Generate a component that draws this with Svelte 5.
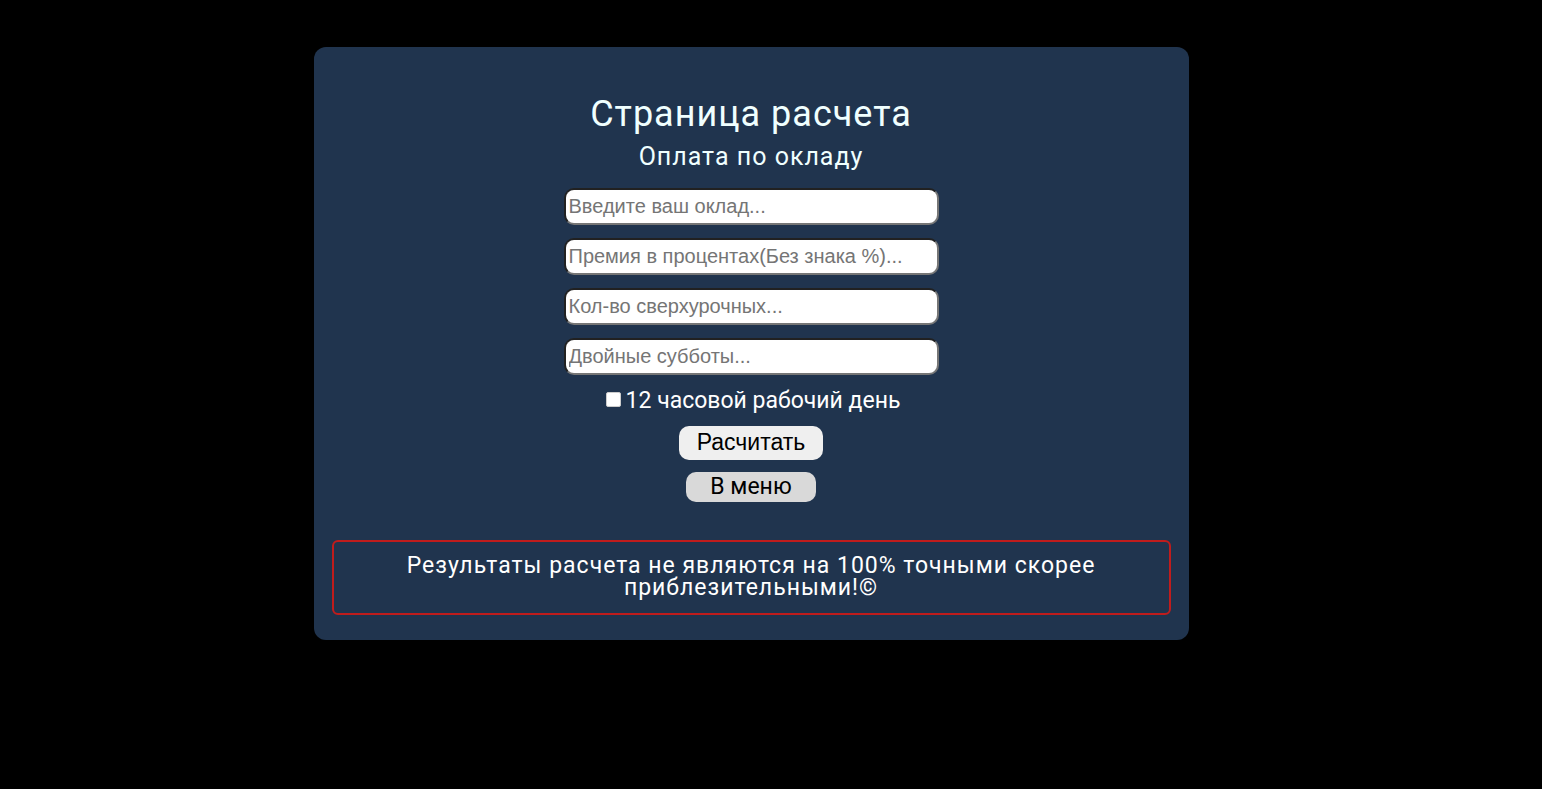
<script>
  const fields = [
    { id: 'salary', hint: 'Введите ваш оклад...' },
    { id: 'bonus', hint: 'Премия в процентах(Без знака %)...' },
    { id: 'overtime', hint: 'Кол-во сверхурочных...' },
    { id: 'saturdays', hint: 'Двойные субботы...' }
  ];
</script>

<main class="card">
  <h1>Страница расчета</h1>
  <h2>Оплата по окладу</h2>
  <form onsubmit={(e) => e.preventDefault()}>
    {#each fields as f}
      <input class="field" type="text" id={f.id} placeholder={f.hint} aria-label={f.hint} />
    {/each}
    <label class="check" for="long-day">
      <input type="checkbox" id="long-day" />
      <span>12 часовой рабочий день</span>
    </label>
    <button class="submit" type="submit">Расчитать</button>
    <a class="menu" href="#menu">В меню</a>
  </form>
  <p class="note">Результаты расчета не являются на 100% точными скорее приблезительными!©</p>
</main>

<style>
  :global(body) {
    background: #000;
    padding: 47px 40px 40px 0;
  }
  .card {
    box-sizing: border-box;
    width: 875px;
    max-width: 100%;
    margin: 0 auto;
    padding: 48px 18px 25px;
    border-radius: 12px;
    background: #20344e;
    color: #fff;
    font-family: Roboto, sans-serif;
    text-align: center;
  }
  h1, h2, p {
    margin: 0;
    font-weight: 400;
  }
  h1 {
    font-size: 36px;
    line-height: 38px;
    letter-spacing: 1px;
    color: #f0ffff;
  }
  h2 {
    margin-top: 10px;
    font-size: 25px;
    line-height: 28px;
    letter-spacing: 1px;
    color: #f0ffff;
  }
  form {
    display: flex;
    flex-direction: column;
    align-items: center;
    margin-top: 17px;
  }
  .field {
    box-sizing: border-box;
    width: 375px;
    max-width: 100%;
    height: 37px;
    margin-bottom: 13px;
    padding: 1px 3px;
    border: 2px inset #767676;
    border-radius: 10px;
    background: #fff;
    font: 20px "Liberation Sans", Arial, sans-serif;
  }
  .field::placeholder {
    color: #757575;
  }
  .check {
    display: flex;
    align-items: center;
    gap: 5px;
    font-size: 23px;
    line-height: 26px;
  }
  .check input {
    appearance: none;
    box-sizing: border-box;
    width: 15px;
    height: 15px;
    margin: 0 0 3px 4px;
    border: 1px solid #ccc;
    border-radius: 2px;
    background: #fff;
  }
  .check input:checked {
    background: #0075ff;
  }
  .submit {
    width: 144px;
    height: 34px;
    margin-top: 12px;
    padding: 0 0 2px;
    border: 0;
    border-radius: 10px;
    background: #efefef;
    color: #000;
    font: 23px "Liberation Sans", Arial, sans-serif;
  }
  .menu {
    width: 130px;
    margin-top: 12px;
    border-radius: 10px;
    background: #d9d9d9;
    color: #000;
    font-size: 23px;
    line-height: 30px;
    text-decoration: none;
  }
  .note {
    margin-top: 38px;
    padding: 13px 40px 14px;
    border: 2px solid #c01c1c;
    border-radius: 6px;
    font-size: 23px;
    line-height: 22px;
    letter-spacing: 1px;
  }
</style>
